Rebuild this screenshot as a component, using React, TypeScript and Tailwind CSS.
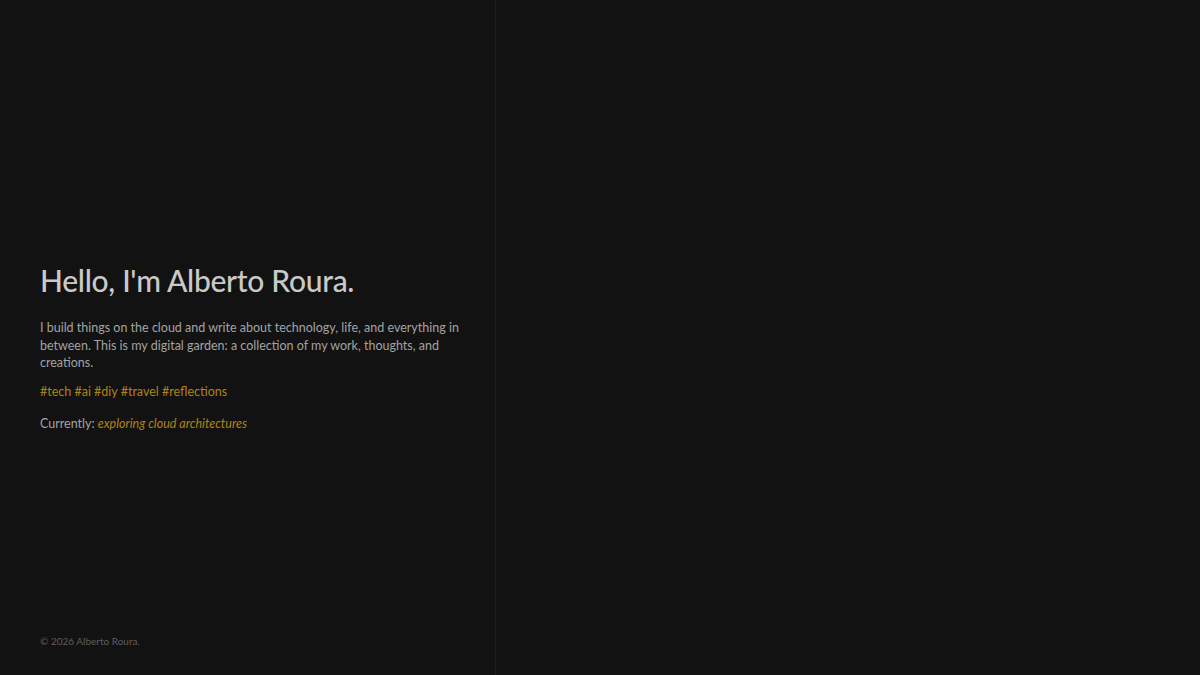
export default function App() {
  return (
    <div
      className="flex h-[675px] w-full bg-[#121212]"
      style={{ fontFamily: 'Lato, "Open Sans", sans-serif' }}
    >
      <aside className="flex w-[496px] shrink-0 flex-col border-r border-[#1e1e1e] pb-[26px] pl-10 pr-6">
        <div className="flex flex-1 flex-col justify-center pt-[62px]">
          <h1 className="text-[30px] font-medium leading-9 tracking-[-0.3px] text-[#c9c9c9]">
            Hello, I'm Alberto Roura.
          </h1>
          <p className="mt-[21px] max-w-[428px] text-[12.5px] leading-[17.5px] text-[#a3a3a3]">
            I build things on the cloud and write about technology, life, and everything in
            between. This is my digital garden: a collection of my work, thoughts, and
            creations.
          </p>
          <p className="mt-[11px] text-[12.5px] text-[#b08314]">
            #tech #ai #diy #travel #reflections
          </p>
          <p className="mt-[14px] text-[12.5px] text-[#a3a3a3]">
            Currently: <em className="text-[#b08314]">exploring cloud architectures</em>
          </p>
        </div>
        <footer className="text-[10px] text-[#5e5e5e]">© 2026 Alberto Roura.</footer>
      </aside>
      <main className="flex-1" />
    </div>
  )
}
